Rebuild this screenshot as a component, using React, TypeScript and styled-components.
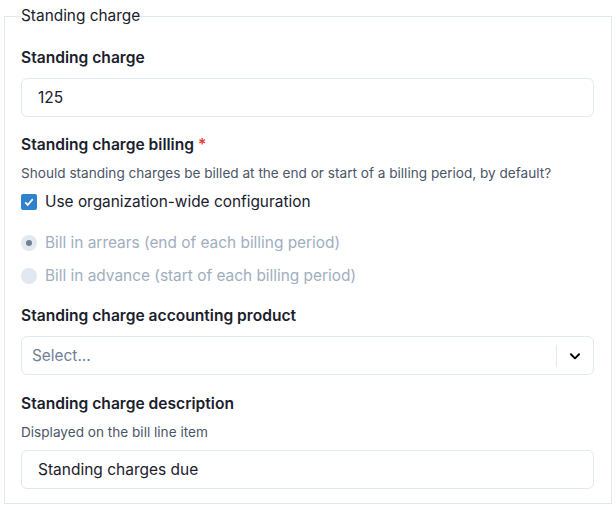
import React from "react";
import styled, { createGlobalStyle } from "styled-components";

const GlobalStyle = createGlobalStyle`
  body {
    margin: 0;
    background: #ffffff;
    font-family: "Inter", "Liberation Sans", sans-serif;
    color: #1a202c;
  }
`;

const Page = styled.div`
  padding: 5px 4px 0 4px;
  width: 608px;
`;

const Fieldset = styled.fieldset`
  margin: 0;
  border: 1px solid #e2e8f0;
  padding: 6px 17px 14px 16px;
  min-width: 0;
`;

const Legend = styled.legend`
  padding: 0;
  font-size: 15.4px;
  color: #1a202c;
  line-height: 22px;
`;

const Field = styled.div<{ gap?: number }>`
  display: flex;
  flex-direction: column;
  margin-top: ${(p) => p.gap ?? 0}px;
`;

const Label = styled.label`
  font-size: 15.6px;
  font-weight: 600;
  line-height: 22px;
  margin-bottom: 9px;
`;

const Required = styled.span`
  color: #e53e3e;
  margin-left: 4px;
`;

const Help = styled.div`
  font-size: 13.6px;
  color: #4a5568;
  line-height: 20px;
  margin-top: -2px;
  margin-bottom: 8px;
`;

const Input = styled.input`
  box-sizing: border-box;
  height: 39px;
  width: 100%;
  border: 1px solid #e2e8f0;
  border-radius: 6px;
  padding: 0 16px;
  font-family: inherit;
  font-size: 15.5px;
  color: #1a202c;
  outline: none;
`;

const CheckRow = styled.label`
  display: flex;
  align-items: center;
  gap: 8px;
  font-size: 15.4px;
  line-height: 22px;
  color: #1a202c;
`;

const CheckBox = styled.span`
  width: 16px;
  height: 16px;
  border-radius: 2px;
  background: #3182ce;
  display: flex;
  align-items: center;
  justify-content: center;
`;

const RadioGroup = styled.div`
  display: flex;
  flex-direction: column;
  gap: 11px;
  margin-top: 19px;
`;

const RadioRow = styled.label`
  display: flex;
  align-items: center;
  gap: 8px;
  font-size: 15.4px;
  line-height: 22px;
  color: #a0aec0;
`;

const RadioDot = styled.span<{ checked?: boolean }>`
  width: 16px;
  height: 16px;
  border-radius: 50%;
  background: #e2e8f0;
  display: flex;
  align-items: center;
  justify-content: center;
  &::after {
    content: "";
    width: 6px;
    height: 6px;
    border-radius: 50%;
    background: ${(p) => (p.checked ? "#718096" : "transparent")};
  }
`;

const Select = styled.div`
  box-sizing: border-box;
  height: 39px;
  border: 1px solid #e2e8f0;
  border-radius: 6px;
  display: flex;
  align-items: center;
`;

const Placeholder = styled.div`
  flex: 1;
  padding-left: 10px;
  font-size: 15.4px;
  color: #718096;
`;

const Separator = styled.span`
  width: 1px;
  height: 22px;
  background: #e2e8f0;
`;

const Indicator = styled.span`
  width: 36px;
  display: flex;
  align-items: center;
  justify-content: center;
`;

export default function App() {
  return (
    <Page>
      <GlobalStyle />
      <Fieldset>
        <Legend>Standing charge</Legend>
        <Field gap={14}>
          <Label>Standing charge</Label>
          <Input defaultValue="125" />
        </Field>

        <Field gap={17}>
          <Label>
            Standing charge billing<Required>*</Required>
          </Label>
          <Help>
            Should standing charges be billed at the end or start of a billing
            period, by default?
          </Help>
          <CheckRow>
            <CheckBox>
              <svg width="10" height="10" viewBox="0 0 12 10">
                <polyline
                  points="1.5 5.5 4.5 8.5 10.5 1.5"
                  fill="none"
                  stroke="#fff"
                  strokeWidth="2"
                />
              </svg>
            </CheckBox>
            Use organization-wide configuration
          </CheckRow>
          <RadioGroup>
            <RadioRow>
              <RadioDot checked />
              Bill in arrears (end of each billing period)
            </RadioRow>
            <RadioRow>
              <RadioDot />
              Bill in advance (start of each billing period)
            </RadioRow>
          </RadioGroup>
        </Field>

        <Field gap={18}>
          <Label>Standing charge accounting product</Label>
          <Select>
            <Placeholder>Select...</Placeholder>
            <Separator />
            <Indicator>
              <svg width="14" height="14" viewBox="0 0 24 24">
                <polyline
                  points="5 9 12 16 19 9"
                  fill="none"
                  stroke="#000"
                  strokeWidth="3.2"
                  strokeLinecap="round"
                  strokeLinejoin="round"
                />
              </svg>
            </Indicator>
          </Select>
        </Field>

        <Field gap={18}>
          <Label>Standing charge description</Label>
          <Help>Displayed on the bill line item</Help>
          <Input defaultValue="Standing charges due" />
        </Field>
      </Fieldset>
    </Page>
  );
}
